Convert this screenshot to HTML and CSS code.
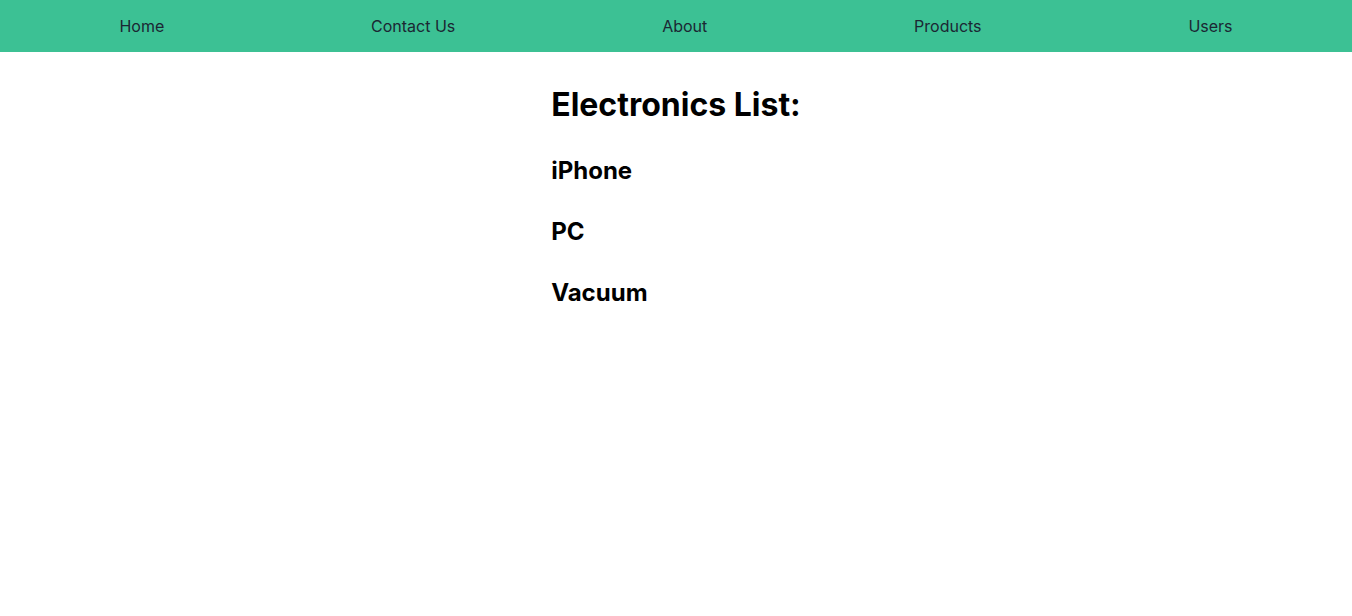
FILE: index.html
```html
<!DOCTYPE html>
<html lang="en">
<head>
<meta charset="utf-8">
<title>Electronics</title>
<link rel="stylesheet" href="styles.css">
</head>
<body>
<nav class="navbar">
  <a class="nav-link" href="#">Home</a>
  <a class="nav-link" href="#">Contact Us</a>
  <a class="nav-link" href="#">About</a>
  <a class="nav-link" href="#">Products</a>
  <a class="nav-link" href="#">Users</a>
</nav>
<main class="page">
  <div class="list">
    <h1 class="list-title">Electronics List:</h1>
    <h2 class="item">iPhone</h2>
    <h2 class="item">PC</h2>
    <h2 class="item">Vacuum</h2>
  </div>
</main>
</body>
</html>
```

FILE: styles.css
```css
html, body {
  margin: 0;
  padding: 0;
  background: #ffffff;
  font-family: Inter, "Noto Sans", sans-serif;
  color: #000;
}

.navbar {
  height: 52px;
  background: #3cc194;
  display: flex;
  align-items: center;
  justify-content: space-around;
  padding: 0 16px;
}

.nav-link {
  color: #1b2733;
  text-decoration: none;
  font-size: 16px;
}

.page {
  display: flex;
  justify-content: center;
}

.list {
  display: flex;
  flex-direction: column;
  padding-top: 33px;
}

.list-title {
  margin: 0 0 16px;
  font-size: 32px;
  font-weight: 700;
}

.item {
  margin: 16px 0;
  font-size: 24px;
  font-weight: 700;
}
```
